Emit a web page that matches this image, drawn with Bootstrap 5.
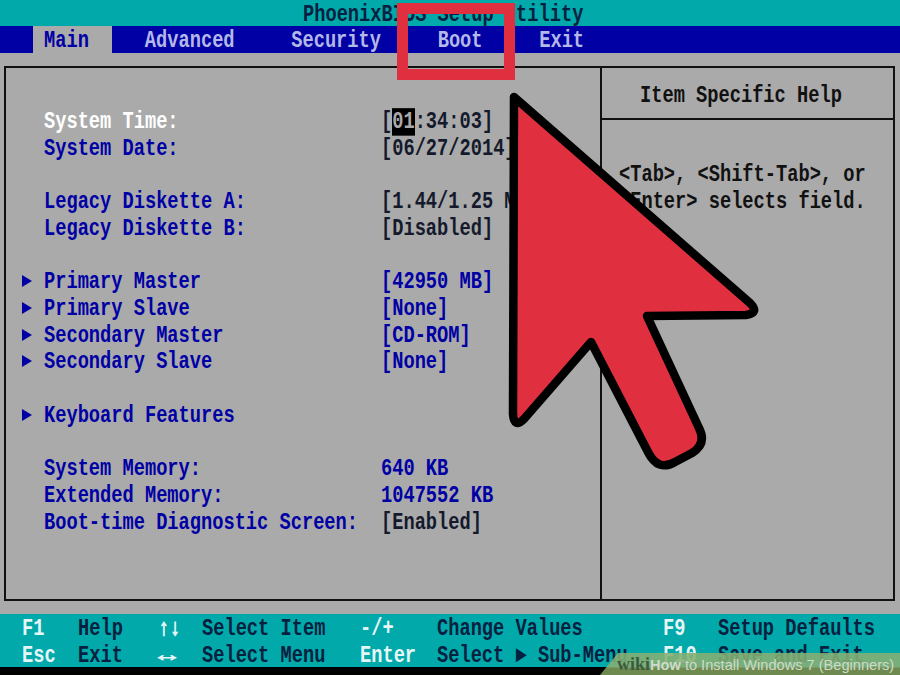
<!DOCTYPE html>
<html lang="en">
<head>
    <meta charset="UTF-8">
    <meta name="viewport" content="width=device-width, initial-scale=1.0">
    <title>PhoenixBIOS Setup Utility</title>
    <link href="https://cdn.jsdelivr.net/npm/bootstrap@5.3.3/dist/css/bootstrap.min.css" rel="stylesheet">
    <style>
        body {
            width: 900px;
            height: 675px;
            overflow: hidden;
            background: #000;
            font-family: "Liberation Mono", monospace;
            font-size: 18.7px;
            font-weight: 700;
            line-height: 26.73px;
        }

        .bios-screen {
            width: 900px;
            height: 675px;
        }

        /* BIOS glyphs are tall and narrow, stretch the mono font to get there */
        .tall {
            display: inline-block;
            transform: translateY(1px) scaleY(1.25);
        }

        .bios-title {
            height: 26px;
            padding: 1px 0 0 303px;
            background: #02a9ab;
            color: #06213f;
        }

        .bios-menu {
            height: 27px;
            padding-left: 33px;
            background: #0000a4;
            color: #b4b8e8;
        }

        .menu-item {
            margin-right: 56.7px;
            padding-top: 1px;
        }

        .menu-item.active-tab {
            margin-right: 33px;
            padding: 1px 23px 0 11px;
            background: #aaa;
            color: #0000a4;
        }

        .bios-body {
            height: 561px;
            padding: 13px 5px 13px 4px;
            background: #aaa;
        }

        .bios-frame {
            height: 100%;
            border: 2px solid #111;
        }

        .main-pane {
            width: 596px;
            padding: 40px 0 0 16px;
            border-right: 2px solid #111;
            color: #0000a4;
        }

        .setting-row {
            height: 26.73px;
            white-space: nowrap;
        }

        .setting-name {
            width: 359px;
            padding-left: 22px;
            flex: none;
            position: relative;
        }

        .setting-name.hi {
            color: #fff;
        }

        .sub-arrow {
            position: absolute;
            left: 0;
            top: 7px;
            width: 0;
            height: 0;
            border-left: 10px solid #0000a4;
            border-top: 6.5px solid transparent;
            border-bottom: 6.5px solid transparent;
        }

        .val-dark {
            color: #141a2c;
        }

        .cursor-cell {
            background: #000;
            color: #aaa;
        }

        .help-pane {
            flex: 1;
            color: #111;
        }

        .help-head {
            height: 52px;
            padding: 14px 0 0 38px;
            border-bottom: 2px solid #111;
        }

        .help-text {
            padding: 41px 0 0 17px;
            white-space: nowrap;
        }

        .bios-footer {
            height: 53px;
            padding: 1px 0 0 22px;
            display: grid;
            grid-template-columns: 56px 80px 44px 158px 77px 226px 55px auto;
            background: #02a9ab;
            color: #06213f;
            white-space: nowrap;
        }

        .bios-footer > span {
            justify-self: start;
        }

        .key-cap {
            color: #e6f6f6;
        }

        .key-arrows {
            -webkit-text-stroke: .7px #e6f6f6;
        }

        .key-wide {
            transform-origin: left center;
            transform: translateY(1px) scaleX(1.6);
        }

        .call-out {
            position: absolute;
            left: 397px;
            top: 3px;
            width: 118px;
            height: 77px;
            border: 11px solid #e03040;
        }

        .arrow-art {
            position: absolute;
            left: 0;
            top: 0;
        }

        .wiki-strip {
            position: absolute;
            left: 600px;
            top: 653px;
            width: 300px;
            height: 22px;
            padding-left: 17px;
            background: linear-gradient(rgba(135, 175, 115, .88) 68%, #6f8a50 68%);
            clip-path: polygon(18px 0, 100% 0, 100% 100%, 0 100%);
            font-family: "Liberation Sans", sans-serif;
            font-size: 14.6px;
            font-weight: 400;
            line-height: 23px;
            color: #d0dac8;
            white-space: nowrap;
        }

        .wiki-logo {
            font-family: "Liberation Serif", serif;
            font-size: 18px;
            font-weight: 700;
            color: #3d5a3a;
        }
    </style>
</head>
<body>
<div class="bios-screen position-relative">
    <div class="bios-title"><span class="tall">PhoenixBIOS Setup Utility</span></div>
    <div class="bios-menu d-flex">
        <div class="menu-item active-tab"><span class="tall">Main</span></div>
        <div class="menu-item"><span class="tall">Advanced</span></div>
        <div class="menu-item"><span class="tall">Security</span></div>
        <div class="menu-item"><span class="tall">Boot</span></div>
        <div class="menu-item"><span class="tall">Exit</span></div>
    </div>

    <div class="bios-body">
        <div class="bios-frame d-flex">
            <div class="main-pane" id="settings"></div>
            <div class="help-pane">
                <div class="help-head"><span class="tall">Item Specific Help</span></div>
                <div class="help-text">
                    <div><span class="tall">&lt;Tab&gt;, &lt;Shift-Tab&gt;, or</span></div>
                    <div><span class="tall">&lt;Enter&gt; selects field.</span></div>
                </div>
            </div>
        </div>
    </div>

    <div class="bios-footer">
        <span class="tall key-cap">F1</span><span class="tall">Help</span><span class="tall key-cap key-arrows">↑↓</span><span class="tall">Select Item</span><span class="tall key-cap">-/+</span><span class="tall">Change Values</span><span class="tall key-cap">F9</span><span class="tall">Setup Defaults</span>
        <span class="tall key-cap">Esc</span><span class="tall">Exit</span><span class="tall key-cap key-arrows key-wide">↔</span><span class="tall">Select Menu</span><span class="tall key-cap">Enter</span><span class="tall">Select ► Sub-Menu</span><span class="tall key-cap">F10</span><span class="tall">Save and Exit</span>
    </div>

    <div class="call-out"></div>
    <svg class="arrow-art" width="900" height="675" viewBox="0 0 900 675">
        <path d="M514 97 L750 303 Q760 313 746 315 L647 316 L699 428 Q707 444 692 453 L675 462 Q658 472 648 452 L591 342 L524 419 Q514 429 513 414 Z" fill="#e03040" stroke="#000" stroke-width="8.5" stroke-linejoin="round"/>
    </svg>
    <div class="wiki-strip"><span class="wiki-logo">wiki</span><b>How</b> to Install Windows 7 (Beginners)</div>
</div>

<script src="https://cdn.jsdelivr.net/npm/bootstrap@5.3.3/dist/js/bootstrap.bundle.min.js"></script>
<script>
    // BIOS rows: label, value, value colour, has sub menu arrow
    const rows = [
        { name: 'System Time:', hi: true, value: '[<span class="cursor-cell">01</span>:34:03]', dark: true },
        { name: 'System Date:', value: '[06/27/2014]', dark: true },
        {},
        { name: 'Legacy Diskette A:', value: '[1.44/1.25 MB]', dark: true },
        { name: 'Legacy Diskette B:', value: '[Disabled]', dark: true },
        {},
        { name: 'Primary Master', value: '[42950 MB]', sub: true },
        { name: 'Primary Slave', value: '[None]', sub: true },
        { name: 'Secondary Master', value: '[CD-ROM]', sub: true },
        { name: 'Secondary Slave', value: '[None]', sub: true },
        {},
        { name: 'Keyboard Features', sub: true },
        {},
        { name: 'System Memory:', value: '640 KB' },
        { name: 'Extended Memory:', value: '1047552 KB' },
        { name: 'Boot-time Diagnostic Screen:', value: '[Enabled]', dark: true }
    ];

    document.getElementById('settings').innerHTML = rows.map(function(r) {
        if (!r.name) return '<div class="setting-row"></div>';
        const arrow = r.sub ? '<span class="sub-arrow"></span>' : '';
        return '<div class="setting-row d-flex"><div class="setting-name' + (r.hi ? ' hi' : '') + '">' + arrow + '<span class="tall">' + r.name + '</span></div>'
            + '<div class="' + (r.dark ? 'val-dark' : '') + '"><span class="tall">' + (r.value || '') + '</span></div></div>';
    }).join('');
</script>
</body>
</html>
